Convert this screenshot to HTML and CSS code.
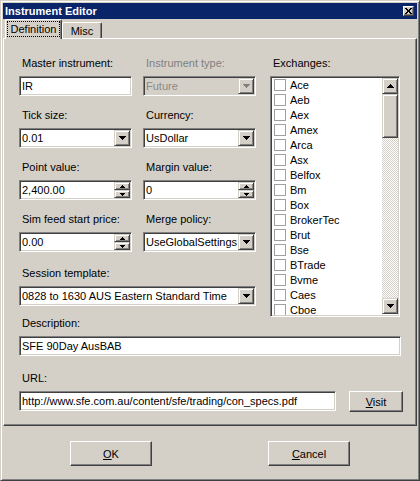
FILE: index.html
```html
<!DOCTYPE html>
<html>
<head>
<meta charset="utf-8">
<title>Instrument Editor</title>
<link rel="stylesheet" href="styles.css">
</head>
<body>
<div class="window">
  <div class="titlebar">
    <span class="title">Instrument Editor</span>
    <span class="close"><svg width="7" height="6" viewBox="0 0 7 6"><path d="M0 0h2v1h1v1h1v-1h1v-1h2v1h-1v1h-1v2h1v1h1v1h-2v-1h-1v-1h-1v1h-1v1h-2v-1h1v-1h1v-2h-1v-1h-1z"/></svg></span>
  </div>
  <div class="tabs">
    <div class="tab active"><span class="focus">Definition</span></div>
    <div class="tab misc">Misc</div>
  </div>
  <div class="panel">
    <div class="top">
      <div class="fields">
        <div class="field">
          <label>Master instrument:</label>
          <div class="edit">IR</div>
        </div>
        <div class="field">
          <label class="dis">Instrument type:</label>
          <div class="combo disabled">
            <span class="val">Future</span>
            <span class="drop"><svg width="7" height="4" viewBox="0 0 7 4"><path d="M0 0H7V1H6V2H5V3H4V4H3V3H2V2H1V1H0Z"/></svg></span>
          </div>
        </div>
        <div class="field">
          <label>Tick size:</label>
          <div class="combo">
            <span class="val">0.01</span>
            <span class="drop"><svg width="7" height="4" viewBox="0 0 7 4"><path d="M0 0H7V1H6V2H5V3H4V4H3V3H2V2H1V1H0Z"/></svg></span>
          </div>
        </div>
        <div class="field">
          <label>Currency:</label>
          <div class="combo">
            <span class="val">UsDollar</span>
            <span class="drop"><svg width="7" height="4" viewBox="0 0 7 4"><path d="M0 0H7V1H6V2H5V3H4V4H3V3H2V2H1V1H0Z"/></svg></span>
          </div>
        </div>
        <div class="field">
          <label>Point value:</label>
          <div class="spin">
            <span class="val">2,400.00</span>
            <span class="spinbtns">
              <span class="sb"><svg width="5" height="3" viewBox="0 0 5 3"><path d="M2 0H3V1H4V2H5V3H0V2H1V1H2Z"/></svg></span>
              <span class="sb"><svg width="5" height="3" viewBox="0 0 5 3"><path d="M0 0H5V1H4V2H3V3H2V2H1V1H0Z"/></svg></span>
            </span>
          </div>
        </div>
        <div class="field">
          <label>Margin value:</label>
          <div class="spin">
            <span class="val">0</span>
            <span class="spinbtns">
              <span class="sb"><svg width="5" height="3" viewBox="0 0 5 3"><path d="M2 0H3V1H4V2H5V3H0V2H1V1H2Z"/></svg></span>
              <span class="sb"><svg width="5" height="3" viewBox="0 0 5 3"><path d="M0 0H5V1H4V2H3V3H2V2H1V1H0Z"/></svg></span>
            </span>
          </div>
        </div>
        <div class="field">
          <label>Sim feed start price:</label>
          <div class="spin">
            <span class="val">0.00</span>
            <span class="spinbtns">
              <span class="sb"><svg width="5" height="3" viewBox="0 0 5 3"><path d="M2 0H3V1H4V2H5V3H0V2H1V1H2Z"/></svg></span>
              <span class="sb"><svg width="5" height="3" viewBox="0 0 5 3"><path d="M0 0H5V1H4V2H3V3H2V2H1V1H0Z"/></svg></span>
            </span>
          </div>
        </div>
        <div class="field">
          <label>Merge policy:</label>
          <div class="combo">
            <span class="val">UseGlobalSettings</span>
            <span class="drop"><svg width="7" height="4" viewBox="0 0 7 4"><path d="M0 0H7V1H6V2H5V3H4V4H3V3H2V2H1V1H0Z"/></svg></span>
          </div>
        </div>
        <div class="field wide session">
          <label>Session template:</label>
          <div class="combo">
            <span class="val">0828 to 1630 AUS Eastern Standard Time</span>
            <span class="drop"><svg width="7" height="4" viewBox="0 0 7 4"><path d="M0 0H7V1H6V2H5V3H4V4H3V3H2V2H1V1H0Z"/></svg></span>
          </div>
        </div>
      </div>
      <div class="field exchanges">
        <label>Exchanges:</label>
        <div class="listbox">
          <ul class="items">
            <li><span class="cb"></span>Ace</li>
            <li><span class="cb"></span>Aeb</li>
            <li><span class="cb"></span>Aex</li>
            <li><span class="cb"></span>Amex</li>
            <li><span class="cb"></span>Arca</li>
            <li><span class="cb"></span>Asx</li>
            <li><span class="cb"></span>Belfox</li>
            <li><span class="cb"></span>Bm</li>
            <li><span class="cb"></span>Box</li>
            <li><span class="cb"></span>BrokerTec</li>
            <li><span class="cb"></span>Brut</li>
            <li><span class="cb"></span>Bse</li>
            <li><span class="cb"></span>BTrade</li>
            <li><span class="cb"></span>Bvme</li>
            <li><span class="cb"></span>Caes</li>
            <li><span class="cb"></span>Cboe</li>
          </ul>
          <div class="vscroll">
            <span class="sbtn"><svg width="7" height="4" viewBox="0 0 7 4"><path d="M3 0H4V1H5V2H6V3H7V4H0V3H1V2H2V1H3Z"/></svg></span>
            <span class="thumb"></span>
            <span class="track"></span>
            <span class="sbtn"><svg width="7" height="4" viewBox="0 0 7 4"><path d="M0 0H7V1H6V2H5V3H4V4H3V3H2V2H1V1H0Z"/></svg></span>
          </div>
        </div>
      </div>
    </div>
    <div class="field desc">
      <label>Description:</label>
      <div class="edit">SFE 90Day AusBAB</div>
    </div>
    <div class="field url">
      <label>URL:</label>
      <div class="urlrow">
        <div class="edit">http://www.sfe.com.au/content/sfe/trading/con_specs.pdf</div>
        <button class="btn visit"><u>V</u>isit</button>
      </div>
    </div>
  </div>
  <div class="actions">
    <button class="btn dlg"><u>O</u>K</button>
    <button class="btn dlg"><u>C</u>ancel</button>
  </div>
</div>
</body>
</html>
```
FILE: styles.css
```css
* { box-sizing: border-box; }
html, body { margin: 0; padding: 0; }
body {
  width: 420px;
  height: 481px;
  overflow: hidden;
  background: #d4d0c8;
  font: 11px "Liberation Sans", Arial, sans-serif;
  color: #000;
}
.window {
  width: 420px;
  height: 481px;
  background: #d4d0c8;
  border: 1px solid;
  border-color: #d4d0c8 #404040 #404040 #d4d0c8;
  box-shadow: inset 1px 1px 0 #fff, inset -1px -1px 0 #808080;
  padding: 2px;
  display: flex;
  flex-direction: column;
}
.titlebar {
  height: 16px;
  flex: 0 0 16px;
  background: #0a246a;
  display: flex;
  align-items: center;
  justify-content: space-between;
  padding: 0 2px 0 2px;
}
.title {
  color: #fff;
  font-weight: bold;
  font-size: 11px;
  line-height: 14px;
}
.close {
  width: 11px;
  height: 10px;
  margin-right: 1px;
  background: #d4d0c8;
  border: 1px solid;
  border-color: #fff #404040 #404040 #fff;
  box-shadow: inset -1px -1px 0 #808080;
  display: flex;
  align-items: center;
  justify-content: center;
}
.close svg { display: block; }
.tabs {
  height: 19px;
  flex: 0 0 19px;
  display: flex;
  align-items: flex-end;
  padding-left: 2px;
}
.tab {
  height: 16px;
  width: 40px;
  border: 1px solid;
  border-bottom: 0;
  border-color: #fff #404040 transparent #fff;
  box-shadow: inset -1px 0 0 #808080;
  border-radius: 2px 2px 0 0;
  display: flex;
  align-items: center;
  justify-content: center;
  line-height: 13px;
  background: #d4d0c8;
}
.tab.misc { padding-top: 1px; }
.tab.active {
  width: 57px;
  height: 20px;
  margin-bottom: -1px;
  position: relative;
  z-index: 1;
  padding-bottom: 1px;
}
.focus {
  outline: 1px dotted #000;
  outline-offset: 0;
  padding: 1px 3px;
  line-height: 12px;
}
.panel {
  height: 388px;
  flex: 0 0 388px;
  border: 1px solid;
  border-color: #fff #404040 #404040 #fff;
  box-shadow: inset -1px -1px 0 #808080;
  padding: 18px 15px 0 15px;
}
.top {
  display: flex;
  gap: 14px;
}
.fields {
  width: 237px;
  display: grid;
  grid-template-columns: 113px 113px;
  column-gap: 11px;
  row-gap: 13px;
  align-content: start;
}
.field label {
  display: block;
  height: 13px;
  line-height: 13px;
  padding-left: 3px;
  margin-bottom: 6px;
  white-space: nowrap;
}
.field label.dis { color: #808080; }
.field.wide { grid-column: 1 / -1; }
.session { margin-top: 2px; }

.edit, .combo, .spin, .listbox {
  border: 1px solid;
  border-color: #808080 #fff #fff #808080;
  box-shadow: inset 1px 1px 0 #404040, inset -1px -1px 0 #d4d0c8;
  background: #fff;
}
.edit {
  height: 20px;
  padding: 0 2px;
  line-height: 18px;
  white-space: nowrap;
  overflow: hidden;
}
.combo, .spin {
  height: 20px;
  padding: 1px;
  display: flex;
}
.val {
  flex: 1;
  min-width: 0;
  padding-left: 1px;
  line-height: 16px;
  white-space: nowrap;
  overflow: hidden;
}
.combo.disabled { background: #d4d0c8; }
.combo.disabled .val { color: #8a8a8a; }
.combo.disabled .drop svg { fill: #808080; }
.drop, .sb, .sbtn, .thumb {
  background: #d4d0c8;
  border: 1px solid;
  border-color: #d4d0c8 #404040 #404040 #d4d0c8;
  box-shadow: inset 1px 1px 0 #fff, inset -1px -1px 0 #808080;
  display: flex;
  align-items: center;
  justify-content: center;
}
.drop {
  width: 16px;
  height: 16px;
  flex: 0 0 16px;
}
.drop svg, .sb svg, .sbtn svg { display: block; }
.spinbtns {
  width: 16px;
  flex: 0 0 16px;
  display: flex;
  flex-direction: column;
}
.sb { height: 8px; }

.exchanges { width: 130px; }
.listbox {
  height: 241px;
  margin-top: 1px;
  padding: 1px;
  display: flex;
}
.items {
  flex: 1;
  list-style: none;
  margin: -1px 0 0 0;
  padding: 0;
  overflow: hidden;
}
.items li {
  height: 15px;
  display: flex;
  align-items: center;
  padding-left: 2px;
  white-space: nowrap;
}
.cb {
  width: 12px;
  height: 12px;
  flex: 0 0 12px;
  border: 1px solid #a0a0a0;
  background: #fff;
  margin-right: 4px;
}
.vscroll {
  width: 16px;
  flex: 0 0 16px;
  display: flex;
  flex-direction: column;
  margin-bottom: 1px;
}
.sbtn { height: 16px; flex: 0 0 16px; }
.thumb { height: 44px; flex: 0 0 44px; }
.track {
  flex: 1;
  background: repeating-conic-gradient(#fff 0 25%, #d4d0c8 0 50%) 0 0 / 2px 2px;
}

.desc { margin-top: 0; }
.url { margin-top: 16px; }
.urlrow {
  display: flex;
  gap: 13px;
  margin-right: -2px;
}
.urlrow .edit { flex: 1; min-width: 0; }

.btn {
  font: inherit;
  color: #000;
  background: #d4d0c8;
  border: 1px solid;
  border-color: #fff #404040 #404040 #fff;
  box-shadow: inset -1px -1px 0 #808080;
  padding: 0;
  margin: 0;
}
.visit { width: 54px; height: 21px; }
.actions {
  display: flex;
  justify-content: center;
  gap: 116px;
  padding-top: 15px;
}
.dlg { width: 82px; height: 25px; }
```
